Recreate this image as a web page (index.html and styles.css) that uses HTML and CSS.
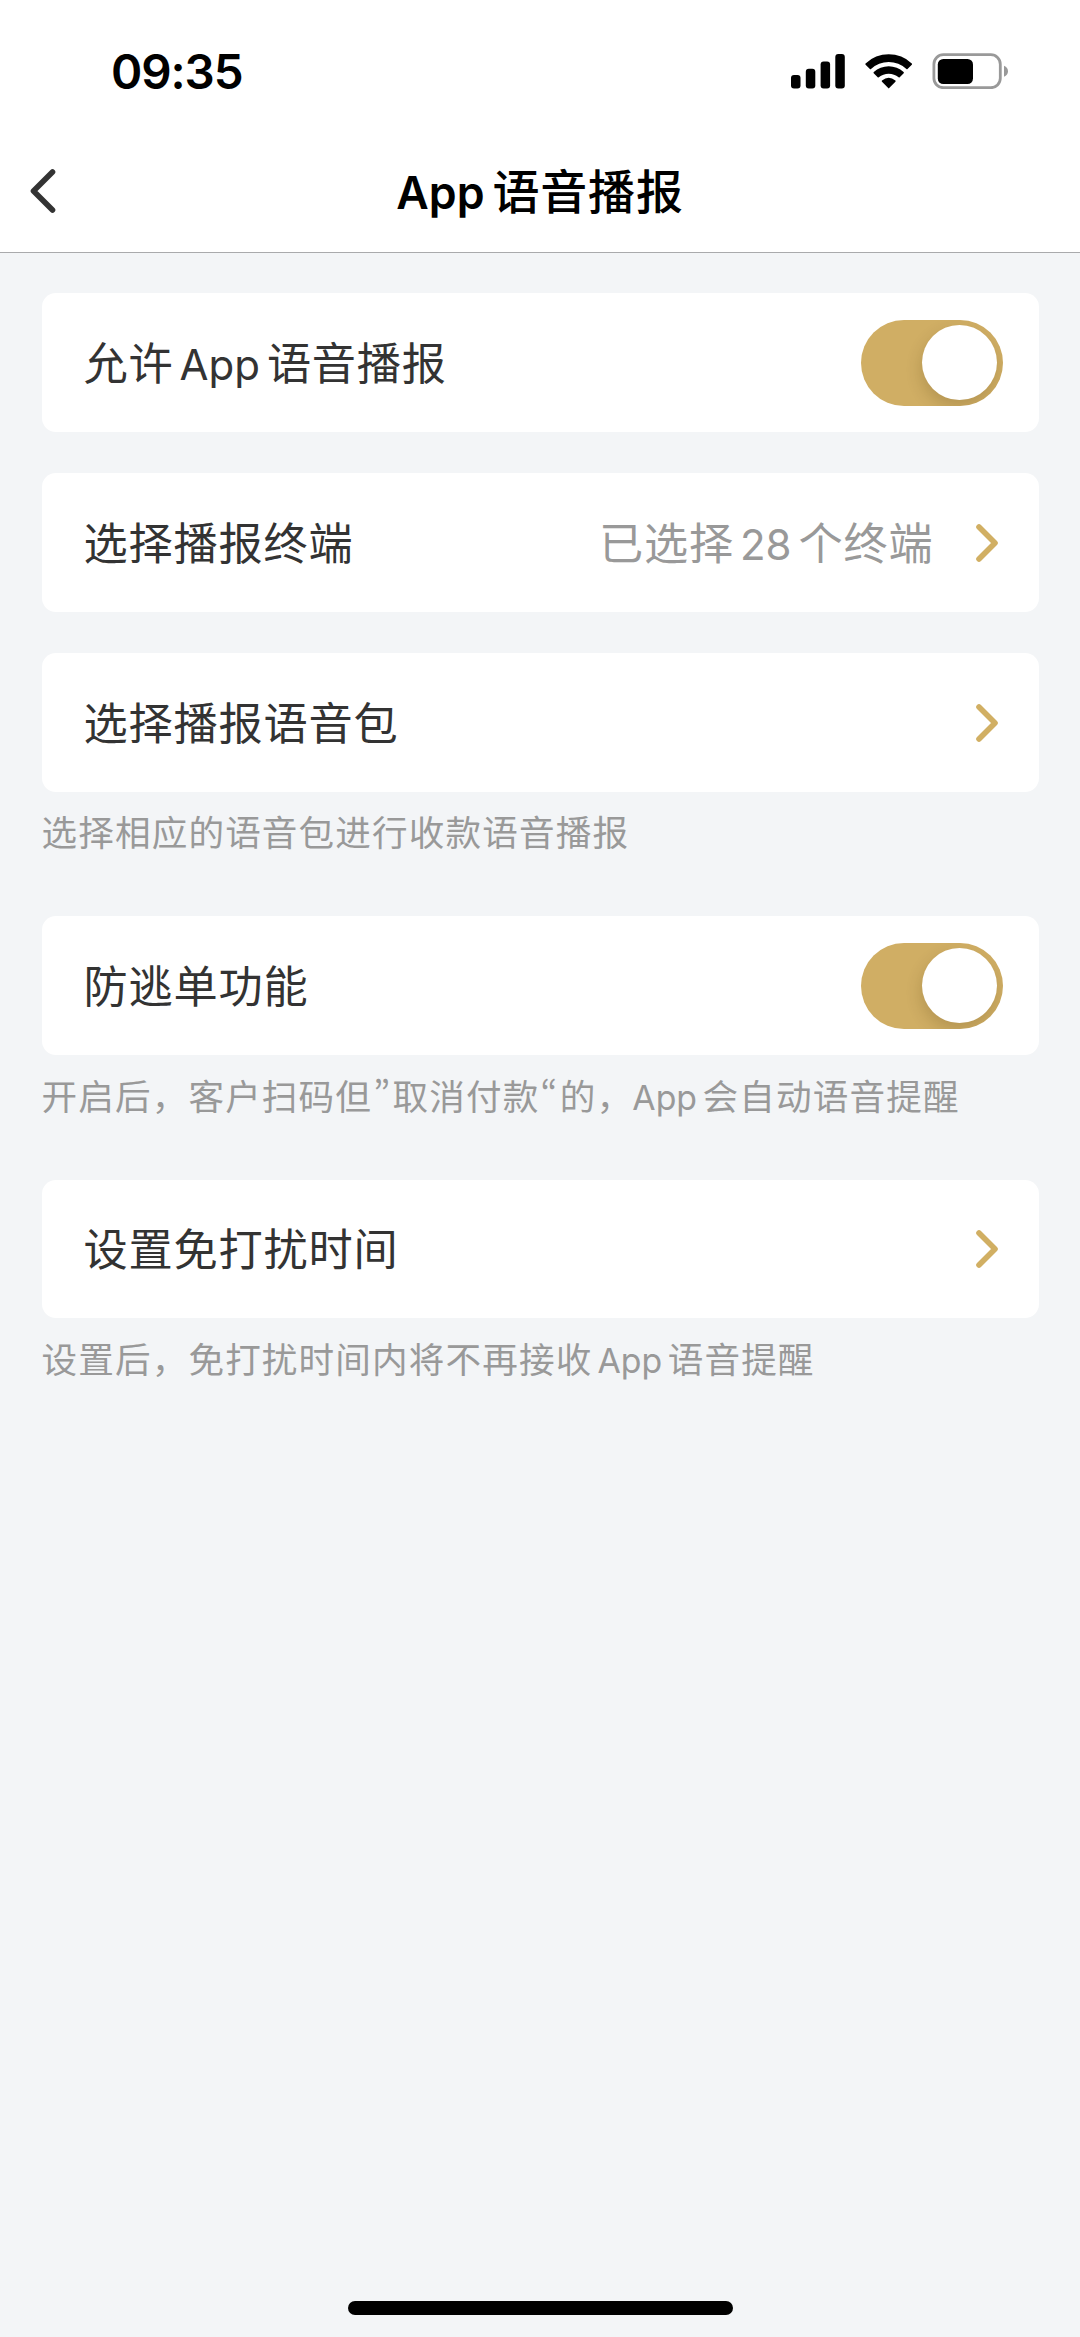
FILE: index.html
```html
<!DOCTYPE html>
<html lang="zh-CN">
<head>
<meta charset="utf-8">
<title>App语音播报</title>
<link rel="stylesheet" href="styles.css">
</head>
<body>
<header class="header">
  <div class="status-bar">
    <span class="time">09:35</span>
    <svg class="status-icons" width="218" height="36" viewBox="0 0 218 36">
      <g fill="#000">
        <rect x="0" y="22" width="9.5" height="13.5" rx="3"/>
        <rect x="14.8" y="15.7" width="9.5" height="19.8" rx="3"/>
        <rect x="29.6" y="8.5" width="9.5" height="27" rx="3"/>
        <rect x="44.3" y="1" width="9.5" height="34.5" rx="3"/>
        <path d="M97.7 35.5 L91 28.8 Q90.3 28.1 91 27.5 Q97.700 21.800 104.4 27.500 Q105.100 28.100 104.400 28.800 Z"/>
        <path d="M86.700 24.300 L82.700 20.300 Q82.200 19.700 82.800 19.100 A22 22 0 0 1 112.600 19.100 Q113.200 19.700 112.700 20.300 L108.700 24.300 Q108.200 24.700 107.600 24.200 A15.500 15.500 0 0 0 87.800 24.200 Q87.200 24.700 86.700 24.300 Z"/>
        <path d="M78.900 15.900 L74.600 11.700 Q74 11.100 74.600 10.400 A33.500 33.500 0 0 1 120.800 10.400 Q121.400 11.100 120.800 11.700 L116.500 15.900 Q116 16.400 115.400 15.900 A26 26 0 0 0 80 15.900 Q79.400 16.400 78.900 15.900 Z"/>
        <rect x="146.800" y="6" width="35.200" height="25" rx="5.500"/>
      </g>
      <rect x="142.900" y="1.700" width="66.400" height="33" rx="9.500" fill="none" stroke="#999" stroke-width="2.800"/>
      <path d="M213 12.700 Q217 14.500 217 18.200 Q217 22 213 23.800 Z" fill="#999"/>
    </svg>
  </div>
  <nav class="nav-bar">
    <svg class="back" width="30" height="48" viewBox="0 0 30 48"><path d="M24.500 5 L5.500 24 L24.500 43"/></svg>
    <h1 class="title"><span class="latin">App</span>语音播报</h1>
  </nav>
</header>
<main class="settings">
  <section class="group">
    <div class="card">
      <span class="label">允许<span class="latin">App</span>语音播报</span>
      <span class="toggle"><span class="knob"></span></span>
    </div>
  </section>
  <section class="group">
    <div class="card">
      <span class="label">选择播报终端</span>
      <span class="value">已选择<span class="latin">28</span>个终端</span>
      <svg class="chevron" width="24" height="40" viewBox="0 0 24 40"><path d="M4 4 L20 20 L4 36"/></svg>
    </div>
  </section>
  <section class="group with-hint">
    <div class="card">
      <span class="label">选择播报语音包</span>
      <svg class="chevron" width="24" height="40" viewBox="0 0 24 40"><path d="M4 4 L20 20 L4 36"/></svg>
    </div>
    <p class="hint">选择相应的语音包进行收款语音播报</p>
  </section>
  <section class="group with-hint">
    <div class="card">
      <span class="label">防逃单功能</span>
      <span class="toggle"><span class="knob"></span></span>
    </div>
    <p class="hint">开启后，客户扫码但<span class="quote">”</span>取消付款<span class="quote">“</span>的，<span class="latin after-comma">App</span>会自动语音提醒</p>
  </section>
  <section class="group with-hint">
    <div class="card">
      <span class="label">设置免打扰时间</span>
      <svg class="chevron" width="24" height="40" viewBox="0 0 24 40"><path d="M4 4 L20 20 L4 36"/></svg>
    </div>
    <p class="hint">设置后，免打扰时间内将不再接收<span class="latin">App</span>语音提醒</p>
  </section>
</main>
<footer class="home"><span class="home-bar"></span></footer>
</body>
</html>
```
FILE: styles.css
```css
* { box-sizing: border-box; }
body {
  margin: 0;
  width: 1080px;
  height: 2337px;
  display: flex;
  flex-direction: column;
  background: #f3f5f7;
  color: #333;
  font-family: "Noto Sans CJK SC", sans-serif;
  overflow: hidden;
}
.header {
  height: 253px;
  background: #fff;
  border-bottom: 1px solid #a9aaac;
}
.status-bar {
  height: 130px;
  padding: 53px 71.500px 0 111px;
  display: flex;
  justify-content: space-between;
  align-items: flex-start;
}
.time {
  font: 600 47.500px/38px Inter, sans-serif;
  letter-spacing: -1.100px;
  color: #000;
}
.nav-bar {
  height: 122px;
  padding: 0 28px;
  display: grid;
  grid-template-columns: 30px 1fr 30px;
  align-items: center;
}
.back path { fill: none; stroke: #333; stroke-width: 5.600; stroke-linecap: round; stroke-linejoin: round; }
.title {
  margin: 0;
  padding-bottom: 5px;
  text-align: center;
  font-size: 47px;
  font-weight: 500;
  line-height: 60px;
  letter-spacing: 0.800px;
  color: #000;
  white-space: nowrap;
}
.latin { font-family: Inter, sans-serif; font-size: 0.950em; line-height: 0; letter-spacing: 0; }
.title .latin { margin-right: 8px; font-weight: 600; }
.settings {
  flex: 1;
  padding: 40.300px 41.500px 0;
}
.group { height: 180px; }
.with-hint { height: 263.200px; }
.card {
  height: 138.600px;
  padding: 0 36px 0 42px;
  border-radius: 14px;
  background: #fff;
  display: flex;
  align-items: center;
  font-size: 44.200px;
  line-height: 60px;
  letter-spacing: 0.800px;
  white-space: nowrap;
}
.label { flex: 1; padding-bottom: 4px; }
.label .latin { margin: 0 7px 0 6px; }
.value { color: #999; margin-right: 41px; padding-bottom: 4px; }
.value .latin { margin: 0 7px 0 6px; }
.toggle {
  width: 142px;
  height: 86px;
  padding: 5.500px;
  border-radius: 43px;
  background: #d0ae64;
  display: flex;
  justify-content: flex-end;
  overflow: hidden;
}
.knob {
  width: 75px;
  height: 75px;
  border-radius: 50%;
  background: #fff;
  box-shadow: -1px 7px 16px rgba(70, 50, 10, 0.200);
}
.chevron { margin-right: 4px; }
.chevron path { fill: none; stroke: #d1af63; stroke-width: 5.600; stroke-linecap: round; stroke-linejoin: round; }
.hint {
  margin: 14.500px 0 0;
  font-size: 35.600px;
  line-height: 50px;
  letter-spacing: 1.150px;
  color: #999;
  white-space: nowrap;
}
.hint .latin { margin: 0 5.500px 0 5px; }
.hint .after-comma { margin-left: -1px; }
.quote { font-feature-settings: "pwid"; margin: 0 1.200px; }
.home {
  height: 36px;
  display: flex;
  justify-content: center;
}
.home-bar { width: 385px; height: 13.700px; border-radius: 7px; background: #000; }
```
